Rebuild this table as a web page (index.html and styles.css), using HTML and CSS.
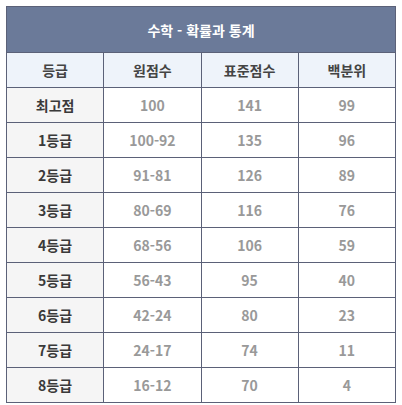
FILE: index.html
```html
<!DOCTYPE html>
<html lang="ko">
<head>
<meta charset="utf-8">
<link rel="stylesheet" href="styles.css">
</head>
<body>
<table class="grade">
  <thead>
    <tr><th class="title" colspan="4">수학 - 확률과 통계</th></tr>
    <tr class="head"><th>등급</th><th>원점수</th><th>표준점수</th><th>백분위</th></tr>
  </thead>
  <tbody>
    <tr><th>최고점</th><td>100</td><td>141</td><td>99</td></tr>
    <tr><th>1등급</th><td>100-92</td><td>135</td><td>96</td></tr>
    <tr><th>2등급</th><td>91-81</td><td>126</td><td>89</td></tr>
    <tr><th>3등급</th><td>80-69</td><td>116</td><td>76</td></tr>
    <tr><th>4등급</th><td>68-56</td><td>106</td><td>59</td></tr>
    <tr><th>5등급</th><td>56-43</td><td>95</td><td>40</td></tr>
    <tr><th>6등급</th><td>42-24</td><td>80</td><td>23</td></tr>
    <tr><th>7등급</th><td>24-17</td><td>74</td><td>11</td></tr>
    <tr><th>8등급</th><td>16-12</td><td>70</td><td>4</td></tr>
  </tbody>
</table>
</body>
</html>
```
FILE: styles.css
```css
html, body { margin: 0; padding: 0; background: #fff; }
body { padding: 6px; }
.grade {
  width: 390px;
  border-collapse: collapse;
  table-layout: fixed;
  font-family: "Noto Sans CJK KR", "Noto Sans", sans-serif;
  font-size: 14px;
  font-weight: 700;
  text-align: center;
}
.grade th, .grade td {
  border: 1px solid #5b6178;
  height: 34px;
  padding: 0;
  line-height: 20px;
}
.grade .title {
  height: 45px;
  background: #6b7a99;
  color: #fff;
}
.grade .head th {
  background: #eef3fa;
  color: #444;
}
.grade tbody th {
  background: #f5f5f5;
  color: #3a3a3a;
}
.grade tbody td {
  background: #fff;
  color: #999;
}
```
